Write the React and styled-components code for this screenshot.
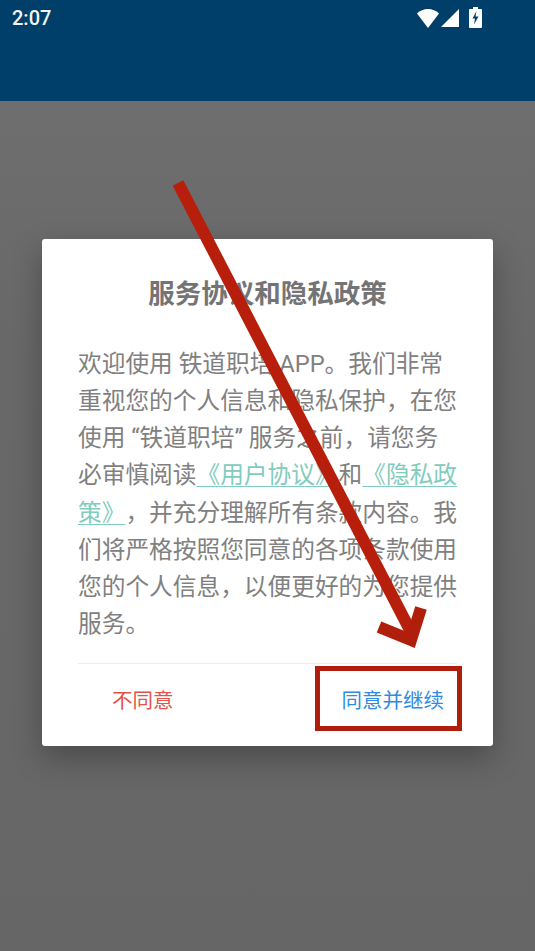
import styled, { createGlobalStyle } from 'styled-components';

const Global = createGlobalStyle`
  html, body { margin: 0; padding: 0; background: #686868; }
  * { box-sizing: border-box; }
`;

const Screen = styled.div`
  position: relative;
  width: 535px;
  height: 951px;
  display: flex;
  flex-direction: column;
  overflow: hidden;
  font-family: Roboto, "Noto Sans CJK SC", sans-serif;
`;

const AppBar = styled.header`
  height: 101px;
  background: #003f69;
  padding: 7px 53px 0 12px;
  display: flex;
  align-items: flex-start;
  justify-content: space-between;
`;

const Clock = styled.span`
  color: #f2f6f8;
  font-size: 20px;
  line-height: 23px;
  font-weight: 500;
`;

const StatusIcons = styled.div`
  display: flex;
  align-items: center;
  margin-top: 0;
`;

const Scrim = styled.main`
  flex: 1;
  background: linear-gradient(#6e6e6e, #686868 30%, #666);
  padding: 138px 42px 0;
`;

const Dialog = styled.section`
  width: 451px;
  height: 507px;
  background: #fff;
  border-radius: 3px;
  padding: 37px 36px 0;
  display: flex;
  flex-direction: column;
  box-shadow: 0 12px 30px rgba(0, 0, 0, 0.28);
`;

const Title = styled.h1`
  margin: 0;
  text-align: center;
  color: #747474;
  font-size: 26.5px;
  line-height: 36px;
  font-weight: 700;
`;

const Body = styled.p`
  margin: 34px -2px 0 0;
  color: #808080;
  font-size: 23.7px;
  line-height: 37.15px;
  font-weight: 400;
  text-spacing-trim: space-all;
`;

const PolicyLink = styled.a`
  color: #82ccbd;
  text-decoration: underline;
  text-underline-offset: 3px;
  text-decoration-thickness: 1px;
`;

const Actions = styled.footer`
  margin-top: 20px;
  border-top: 1px solid #ececec;
  display: flex;
  justify-content: space-between;
  padding: 22px 13px 0 34px;
`;

const Action = styled.button`
  border: 0;
  background: none;
  padding: 0;
  font: inherit;
  font-size: 20.5px;
  line-height: 30px;
  color: ${p => p.$tone};
`;

const Highlight = styled.div`
  position: absolute;
  left: 315px;
  top: 666px;
  width: 147px;
  height: 65px;
  border: 5px solid #ad1f0c;
`;

const Arrow = styled.svg`
  position: absolute;
  left: 0;
  top: 0;
  pointer-events: none;
`;

const Wifi = () => (
  <svg width="22" height="20" viewBox="0 0 22 20">
    <path fill="#fff" d="M0 5.5C3 2.6 6.8 1 11 1s8 1.6 11 4.5L11 20z" />
  </svg>
);

const Signal = () => (
  <svg width="18" height="20" viewBox="0 0 18 20" style={{ marginLeft: 2 }}>
    <path fill="#fff" d="M18 1v18H0z" />
  </svg>
);

const Battery = () => (
  <svg width="13" height="21" viewBox="0 0 13 21" style={{ marginLeft: 10 }}>
    <path fill="#fff" d="M4 0h5v2h3a1 1 0 0 1 1 1v17a1 1 0 0 1-1 1H1a1 1 0 0 1-1-1V3a1 1 0 0 1 1-1h3z" />
    <path fill="#00406a" d="M7.5 4 3.5 11.5h2.5l-1 6 4.5-8H6.5z" />
  </svg>
);

export default function App() {
  return (
    <Screen>
      <Global />
      <AppBar>
        <Clock>2:07</Clock>
        <StatusIcons>
          <Wifi />
          <Signal />
          <Battery />
        </StatusIcons>
      </AppBar>
      <Scrim>
        <Dialog>
          <Title>服务协议和隐私政策</Title>
          <Body>
            欢迎使用 铁道职培 APP。我们非常重视您的个人信息和隐私保护，在您使用 “铁道职培” 服务之前，请您务必审慎阅读
            <PolicyLink>《用户协议》</PolicyLink>和<PolicyLink>《隐私政策》</PolicyLink>
            ，并充分理解所有条款内容。我们将严格按照您同意的各项条款使用您的个人信息，以便更好的为您提供服务。
          </Body>
          <Actions>
            <Action $tone="#e0534a">不同意</Action>
            <Action $tone="#2f8be0">同意并继续</Action>
          </Actions>
        </Dialog>
      </Scrim>
      <Highlight />
      <Arrow width="535" height="951" viewBox="0 0 535 951">
        <path fill="none" stroke="#b71f0c" strokeWidth="12" d="M178 183 411 632" />
        <path fill="none" stroke="#b01e0c" strokeWidth="12" d="M421 608 411 640 379 627" />
      </Arrow>
    </Screen>
  );
}
